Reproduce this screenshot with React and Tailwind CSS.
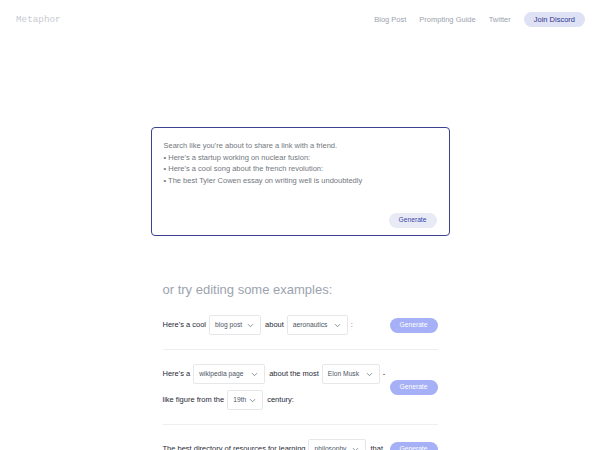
import React from 'react'

const Select = ({ value, w }) => (
    <span className={`inline-flex items-center justify-between h-[20px] ${w} px-[5px] mx-[3px] border border-[#e5e7eb] rounded-[2px] bg-white text-[6.7px] text-[#4b5563] align-middle`}>
        <span>{value}</span>
        <svg width="7" height="5" viewBox="0 0 7 5" className="mr-[1px]">
            <path d="M1 1.2 L3.5 3.7 L6 1.2" fill="none" stroke="#6b7280" strokeWidth="0.8" />
        </svg>
    </span>
)

const GenBtn = () => (
    <button className="w-[48px] h-[15px] rounded-full bg-[#a5b0f6] text-white text-[6.7px] shrink-0">
        Generate
    </button>
)

const App = () => {
    return (
        <div className="w-[600px] h-[450px] overflow-hidden bg-white" style={{ fontFamily: '"Liberation Sans", Arial, sans-serif' }}>
            {/* header */}
            <nav className="flex justify-between items-center h-[39px] pl-4 pr-[15px]">
                <span className="text-[9.3px] text-[#c8cad2] font-['Liberation_Mono',monospace]">Metaphor</span>
                <div className="flex items-center gap-[13px] text-[7.5px] text-[#9ca3af]">
                    <span>Blog Post</span>
                    <span>Prompting Guide</span>
                    <span>Twitter</span>
                    <span className="h-[15px] px-[10px] flex items-center rounded-full bg-[#dfe1f5] text-[#2b3590]">Join Discord</span>
                </div>
            </nav>

            <div className="w-[299px] mx-auto">
                {/* search card */}
                <div className="mt-[88px] h-[109px] border-[1.5px] border-[#3c428d] rounded-[4px] px-[12px] pt-[12px] flex flex-col">
                    <div className="text-[7.5px] leading-[11.5px] text-[#737780]">
                        <p>Search like you're about to share a link with a friend.</p>
                        <p>• Here's a startup working on nuclear fusion:</p>
                        <p>• Here's a cool song about the french revolution:</p>
                        <p>• The best Tyler Cowen essay on writing well is undoubtedly</p>
                    </div>
                    <div className="flex justify-end mt-auto mb-[7px]">
                        <button className="w-[48px] h-[15px] rounded-full bg-[#e8eaf6] text-[#3949ab] text-[6.7px]">Generate</button>
                    </div>
                </div>

                {/* examples */}
                <div className="px-3 mt-[46px]">
                    <h2 className="text-[13px] text-[#9ca3af] leading-[16px]">or try editing some examples:</h2>

                    <div className="mt-[17px] flex items-center justify-between h-[20px] text-[7.5px] text-[#1f2937]">
                        <div className="flex items-center">
                            <span>Here's a cool</span>
                            <Select value="blog post" w="w-[52px]" />
                            <span className="ml-[1px]">about</span>
                            <Select value="aeronautics" w="w-[61px]" />
                            <span className="text-[#6b7280]">:</span>
                        </div>
                        <GenBtn />
                    </div>

                    <div className="h-px bg-[#eceef2] mt-[14px]" />

                    <div className="mt-[14px] flex items-center justify-between text-[7.5px] text-[#1f2937]">
                        <div className="flex flex-col gap-[6px]">
                            <div className="flex items-center h-[20px]">
                                <span>Here's a</span>
                                <Select value="wikipedia page" w="w-[72px]" />
                                <span className="ml-[1px]">about the most</span>
                                <Select value="Elon Musk" w="w-[58px]" />
                                <span>-</span>
                            </div>
                            <div className="flex items-center h-[20px]">
                                <span>like figure from the</span>
                                <Select value="19th" w="w-[36px]" />
                                <span className="ml-[1px]">century:</span>
                            </div>
                        </div>
                        <GenBtn />
                    </div>

                    <div className="h-px bg-[#eceef2] mt-[14px]" />

                    <div className="mt-[14px] flex items-center justify-between h-[20px] text-[7.5px] text-[#1f2937]">
                        <div className="flex items-center">
                            <span>The best directory of resources for learning</span>
                            <Select value="philosophy" w="w-[58px]" />
                            <span className="ml-[1px]">that</span>
                        </div>
                        <GenBtn />
                    </div>
                </div>
            </div>
        </div>
    )
}

export default App
